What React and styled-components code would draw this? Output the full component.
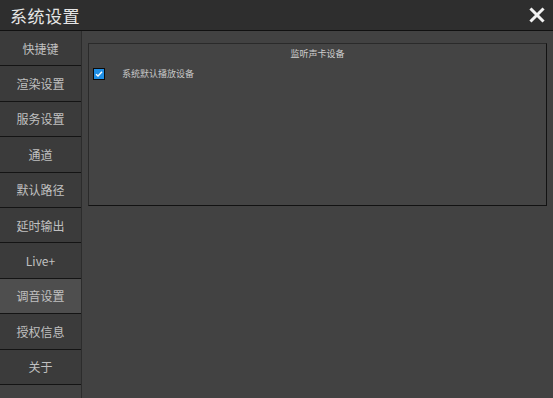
import React, { useState } from 'react';
import styled, { createGlobalStyle } from 'styled-components';

const GlobalStyle = createGlobalStyle`
  html, body {
    margin: 0;
    padding: 0;
    background: #424242;
  }
  body {
    font-family: "Noto Sans CJK SC", "Liberation Sans", sans-serif;
  }
  * {
    box-sizing: border-box;
  }
`;

const Window = styled.div`
  width: 553px;
  height: 398px;
  display: flex;
  flex-direction: column;
  background: #424242;
  overflow: hidden;
`;

const TitleBar = styled.div`
  height: 31px;
  flex: none;
  display: flex;
  align-items: center;
  justify-content: space-between;
  padding: 0 8px 0 10px;
  background: #2e2e2e;
  border-bottom: 1px solid #111;
`;

const Title = styled.div`
  font-size: 17px;
  color: #e6e6e6;
  letter-spacing: 0.5px;
`;

const Close = styled.button`
  border: none;
  background: none;
  padding: 0;
  width: 16px;
  height: 16px;
  display: flex;
  cursor: pointer;
`;

const Body = styled.div`
  flex: 1;
  display: flex;
`;

const Sidebar = styled.div`
  width: 82px;
  flex: none;
  display: flex;
  flex-direction: column;
  border-right: 1px solid #2c2c2c;
`;

const NavItem = styled.div`
  height: 35.4px;
  flex: none;
  display: flex;
  align-items: center;
  justify-content: center;
  font-size: 12px;
  color: #c0c0c0;
  background: ${({ active }) => (active ? '#4e4e4e' : '#3b3b3b')};
  border-bottom: 1px solid #141414;
  cursor: pointer;
`;

const Content = styled.div`
  flex: 1;
  padding: 12px 6px 0 6px;
`;

const Panel = styled.div`
  height: 163px;
  border: 1px solid #121212;
  border-top-color: #2a2a2a;
  border-left-color: #2a2a2a;
  background: #444444;
  padding: 3px 4px;
`;

const PanelTitle = styled.div`
  text-align: center;
  font-size: 9px;
  color: #cfcfcf;
  line-height: 14px;
`;

const Row = styled.label`
  display: flex;
  align-items: center;
  margin-top: 6px;
  gap: 17px;
  font-size: 9px;
  color: #c8c8c8;
`;

const Check = styled.span`
  width: 12px;
  height: 12px;
  border: 1px solid #0a0a0a;
  background: #1f8fe6;
  display: flex;
  align-items: center;
  justify-content: center;
`;

const items = ['快捷键', '渲染设置', '服务设置', '通道', '默认路径', '延时输出', 'Live+', '调音设置', '授权信息', '关于'];

export default function App() {
  const [active, setActive] = useState('调音设置');
  return (
    <>
      <GlobalStyle />
      <Window>
        <TitleBar>
          <Title>系统设置</Title>
          <Close aria-label="close">
            <svg width="16" height="16" viewBox="0 0 16 16">
              <path d="M2.5 2.5 L13.5 13.5 M13.5 2.5 L2.5 13.5" stroke="#f2f2f2" strokeWidth="3" strokeLinecap="square" />
            </svg>
          </Close>
        </TitleBar>
        <Body>
          <Sidebar>
            {items.map(item => (
              <NavItem key={item} active={item === active} onClick={() => setActive(item)}>
                {item}
              </NavItem>
            ))}
          </Sidebar>
          <Content>
            <Panel>
              <PanelTitle>监听声卡设备</PanelTitle>
              <Row>
                <Check>
                  <svg width="8" height="8" viewBox="0 0 8 8">
                    <path d="M1 4.2 L3 6 L7 1.8" stroke="#fff" strokeWidth="1.4" fill="none" />
                  </svg>
                </Check>
                系统默认播放设备
              </Row>
            </Panel>
          </Content>
        </Body>
      </Window>
    </>
  );
}
